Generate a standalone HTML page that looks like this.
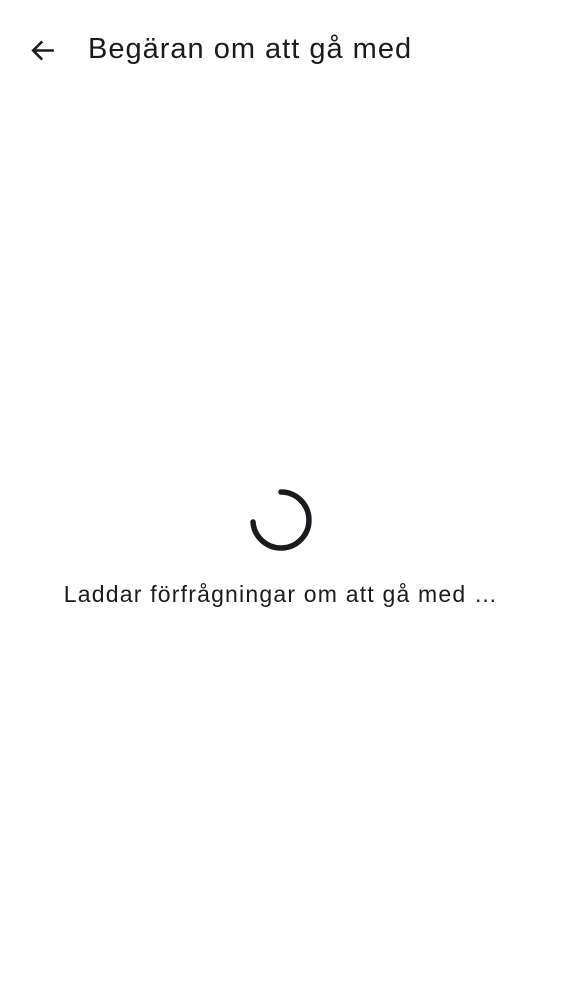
<!DOCTYPE html>
<html><head><meta charset="utf-8"><style>
html,body{margin:0;padding:0;background:#fff;width:562px;height:1000px;overflow:hidden;font-family:"Liberation Sans",sans-serif;color:#1b1b1f}
.title{position:absolute;left:88px;top:31px;font-size:29px;line-height:36px;letter-spacing:1px;white-space:nowrap}
.msg{position:absolute;left:0;width:562px;top:580px;text-align:center;font-size:23px;line-height:28px;letter-spacing:1.2px;white-space:nowrap}
</style></head><body>
<svg style="position:absolute;left:28px;top:35px" width="31" height="31" viewBox="0 0 24 24"><path d="M20 12H5M11 5l-7 7 7 7" fill="none" stroke="#1b1b1f" stroke-width="2"/></svg>
<div class="title">Begäran om att gå med</div>
<svg style="position:absolute;left:245px;top:484px" width="72" height="72" viewBox="0 0 72 72"><path d="M36 8 A28 28 0 1 1 8 38" fill="none" stroke="#1b1b1f" stroke-width="5.5" stroke-linecap="round"/></svg>
<div class="msg">Laddar förfrågningar om att gå med …</div>
</body></html>
